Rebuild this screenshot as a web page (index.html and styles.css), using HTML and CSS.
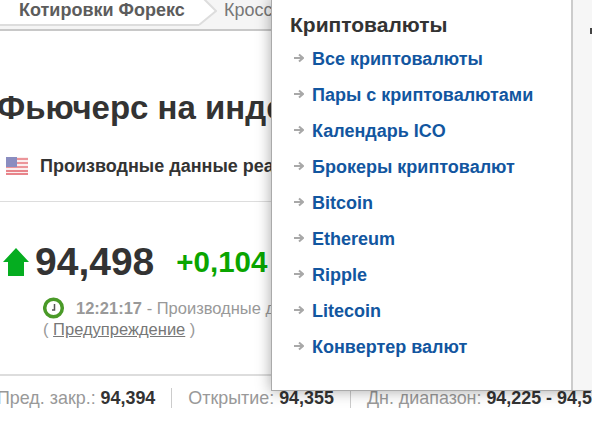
FILE: index.html
```html
<!DOCTYPE html>
<html lang="ru">
<head>
    <meta charset="UTF-8">
    <title>Фьючерс на индекс</title>
    <link rel="stylesheet" href="styles.css">
</head>
<body>
<div class="page">
    <div class="crumbs">
        <a class="crumb-active">Котировки Форекс</a>
        <svg class="chevron" width="18" height="27" viewBox="0 0 18 27">
            <path d="M0 -1 H5 L17 11 L0 25 Z" fill="#fff"/>
            <path d="M5 -1 L17 11 L0 25" fill="none" stroke="#ddd" stroke-width="2"/>
        </svg>
        <a class="crumb">Кросс-курсы</a>
    </div>
    <h1 class="title">Фьючерс на индекс доллара США</h1>
    <div class="subtitle">
        <svg class="flag" width="22" height="18" viewBox="0 0 22 18">
            <rect width="22" height="18" fill="#fbeeee"/>
            <rect y="1" width="22" height="2" fill="#ec959a"/>
            <rect y="5" width="22" height="2" fill="#ec959a"/>
            <rect y="9" width="22" height="2" fill="#ec959a"/>
            <rect y="13" width="22" height="2" fill="#e8848a"/>
            <rect y="16" width="22" height="2" fill="#e8848a"/>
            <rect width="11" height="10" fill="#8a8dc0"/>
        </svg>
        <span>Производные данные реального времени</span>
    </div>
    <div class="quote">
        <svg class="arrow" width="28" height="28" viewBox="0 0 28 28">
            <path d="M14 0 L27 14 H22 V28 H6 V14 H1 Z" fill="#05ad20"/>
        </svg>
        <span class="price">94,498</span>
        <span class="change">+0,104</span>
    </div>
    <div class="time-row">
        <div class="time-line">
            <svg class="clock" width="22" height="22" viewBox="0 0 22 22">
                <circle cx="10.500" cy="11" r="8.800" fill="#fff" stroke="#4a9a28" stroke-width="3.500"/>
                <path d="M11.500 7 V13 H9" fill="none" stroke="#555" stroke-width="1.500"/>
            </svg>
            <span class="time">12:21:17</span>
            <span> - Производные данные реального времени</span>
        </div>
        <div class="warn">( <a href="#">Предупреждение</a> )</div>
    </div>
    <div class="stats">
        <div class="stat">Пред. закр.: <b>94,394</b></div>
        <div class="stat">Открытие: <b>94,355</b></div>
        <div class="stat">Дн. диапазон: <b>94,225 - 94,558</b></div>
    </div>
</div>

<div class="menu">
    <div class="menu-main">
        <h3>Криптовалюты</h3>
        <ul>
            <li><svg width="10" height="10" viewBox="0 0 10 10"><path d="M0 5 H8 M5 1.500 L9 5 L5 8.500" fill="none" stroke="#a8a8a8" stroke-width="2"/></svg><a href="#">Все криптовалюты</a></li>
            <li><svg width="10" height="10" viewBox="0 0 10 10"><path d="M0 5 H8 M5 1.500 L9 5 L5 8.500" fill="none" stroke="#a8a8a8" stroke-width="2"/></svg><a href="#">Пары с криптовалютами</a></li>
            <li><svg width="10" height="10" viewBox="0 0 10 10"><path d="M0 5 H8 M5 1.500 L9 5 L5 8.500" fill="none" stroke="#a8a8a8" stroke-width="2"/></svg><a href="#">Календарь ICO</a></li>
            <li><svg width="10" height="10" viewBox="0 0 10 10"><path d="M0 5 H8 M5 1.500 L9 5 L5 8.500" fill="none" stroke="#a8a8a8" stroke-width="2"/></svg><a href="#">Брокеры криптовалют</a></li>
            <li><svg width="10" height="10" viewBox="0 0 10 10"><path d="M0 5 H8 M5 1.500 L9 5 L5 8.500" fill="none" stroke="#a8a8a8" stroke-width="2"/></svg><a href="#">Bitcoin</a></li>
            <li><svg width="10" height="10" viewBox="0 0 10 10"><path d="M0 5 H8 M5 1.500 L9 5 L5 8.500" fill="none" stroke="#a8a8a8" stroke-width="2"/></svg><a href="#">Ethereum</a></li>
            <li><svg width="10" height="10" viewBox="0 0 10 10"><path d="M0 5 H8 M5 1.500 L9 5 L5 8.500" fill="none" stroke="#a8a8a8" stroke-width="2"/></svg><a href="#">Ripple</a></li>
            <li><svg width="10" height="10" viewBox="0 0 10 10"><path d="M0 5 H8 M5 1.500 L9 5 L5 8.500" fill="none" stroke="#a8a8a8" stroke-width="2"/></svg><a href="#">Litecoin</a></li>
            <li><svg width="10" height="10" viewBox="0 0 10 10"><path d="M0 5 H8 M5 1.500 L9 5 L5 8.500" fill="none" stroke="#a8a8a8" stroke-width="2"/></svg><a href="#">Конвертер валют</a></li>
        </ul>
    </div>
    <div class="menu-side"><span class="side-mark"></span></div>
</div>
</body>
</html>
```

FILE: styles.css
```css
html, body {
    margin: 0;
    overflow: hidden;
    background: #fff;
}
body {
    font-family: "Liberation Sans", Arial, sans-serif;
    color: #333;
    width: 592px;
    height: 426px;
    position: relative;
}
.page {
    width: 592px;
    white-space: nowrap;
    overflow: hidden;
}
.crumbs {
    display: flex;
    align-items: flex-start;
    height: 29px;
    background: #f5f5f5;
    border-bottom: 2px solid #c8c8c8;
    font-size: 18px;
    line-height: 20px;
}
.crumb-active {
    font-weight: bold;
    color: #5c5c5c;
    background: #fff;
    padding-left: 19px;
    width: 180px;
    height: 24px;
    border-bottom: 2px solid #ddd;
}
.chevron {
    flex: none;
}
.crumb {
    color: #777;
    margin-left: 7px;
}
.title {
    font-size: 33px;
    line-height: 40px;
    margin: 57px 0 0 -3px;
}
.subtitle {
    display: flex;
    align-items: center;
    font-size: 18px;
    font-weight: bold;
    margin-top: 28px;
    height: 20px;
    padding: 0 0 25px 6px;
    border-bottom: 1px solid #ddd;
}
.flag {
    margin-right: 12px;
}
.quote {
    display: flex;
    align-items: center;
    margin-top: 39px;
    padding-left: 2px;
    height: 42px;
}
.price {
    font-size: 39px;
    font-weight: bold;
    margin-left: 5px;
}
.change {
    font-size: 29.500px;
    font-weight: bold;
    color: #0aa500;
    margin-left: 22px;
}
.time-row {
    font-size: 16.500px;
    color: #999;
    margin: 14px 0 0 43px;
}
.time-line {
    display: flex;
    align-items: center;
    height: 22px;
    white-space: pre;
}
.clock {
    margin-right: 11px;
}
.time {
    font-weight: bold;
}
.warn {
    line-height: 20px;
}
.warn a {
    color: #777;
}
.stats {
    display: flex;
    align-items: center;
    font-size: 17.900px;
    color: #999;
    margin: 35px 0 0 -3px;
    padding-top: 12px;
    border-top: 2px solid #ddd;
}
.stat {
    padding-right: 16px;
    margin-right: 16px;
    border-right: 1px solid #ccc;
    line-height: 20px;
}
.stat:last-child {
    border: 0;
}
.stat b {
    color: #333;
}
.menu {
    position: absolute;
    left: 271px;
    top: -1px;
    width: 340px;
    height: 392px;
    box-sizing: border-box;
    display: flex;
    background: #f6f6f6;
    border: 1px solid #aaa;
    box-shadow: 0 0 14px rgba(0, 0, 0, 0.35);
}
.menu-main {
    width: 301px;
    flex: none;
    box-sizing: border-box;
    background: #fff;
    border-right: 2px solid #ccc;
    padding: 14px 0 0 18px;
}
.menu-side {
    flex: 1;
    padding: 28px 0 0 17px;
}
.side-mark {
    display: block;
    width: 2px;
    height: 6px;
    background: #444;
}
.menu h3 {
    font-size: 21px;
    line-height: 22px;
    margin: 0 0 5px;
    color: #333;
}
.menu ul {
    list-style: none;
    margin: 0;
    padding: 0;
}
.menu li {
    display: flex;
    align-items: center;
    height: 36px;
    padding-left: 4px;
}
.menu li svg {
    margin: -2px 8px 0 0;
    flex: none;
}
.menu a {
    font-size: 18px;
    font-weight: bold;
    color: #1256a0;
    text-decoration: none;
}
```
